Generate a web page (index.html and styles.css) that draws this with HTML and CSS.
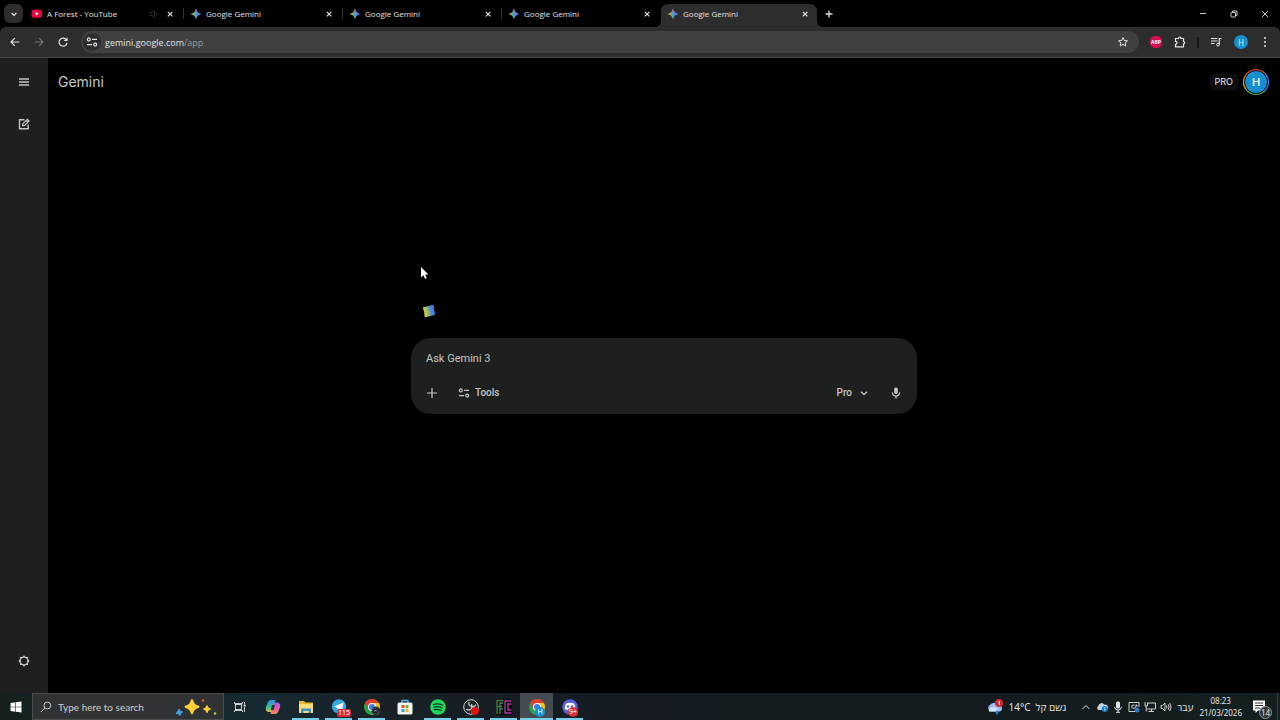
FILE: index.html
```html
<!DOCTYPE html>
<html lang="en">
<head>
    <meta charset="UTF-8">
    <meta name="viewport" content="width=device-width, initial-scale=1.0">
    <title>Google Gemini</title>
    <link rel="stylesheet" href="styles.css">
</head>
<body>

    <!-- Shared icons -->
    <svg class="sprite" aria-hidden="true">
        <defs>
            <linearGradient id="sparkGradient" x1="0" y1="0.6" x2="1" y2="0.4">
                <stop offset="0.1" stop-color="#f2c230"/>
                <stop offset="0.35" stop-color="#5cb37c"/>
                <stop offset="0.6" stop-color="#4b8df8"/>
                <stop offset="1" stop-color="#5a8cf0"/>
            </linearGradient>
            <linearGradient id="sparkRed" x1="0" y1="0" x2="0" y2="1">
                <stop offset="0" stop-color="#ee5b6c"/>
                <stop offset="0.45" stop-color="#ee5b6c" stop-opacity="0"/>
            </linearGradient>
            <linearGradient id="loaderGradient" x1="0" y1="0.65" x2="1" y2="0.35">
                <stop offset="0.1" stop-color="#d3c64a"/>
                <stop offset="0.4" stop-color="#93bd6a"/>
                <stop offset="0.65" stop-color="#4a87e0"/>
                <stop offset="1" stop-color="#3b7bea"/>
            </linearGradient>
            <linearGradient id="copilotGradient" x1="0" y1="0" x2="0" y2="1">
                <stop offset="0" stop-color="#2f8fe8"/>
                <stop offset="0.6" stop-color="#3cc08c"/>
                <stop offset="1" stop-color="#f0c23c"/>
            </linearGradient>
            <linearGradient id="copilotPink" x1="0" y1="0" x2="0" y2="1">
                <stop offset="0" stop-color="#9b5cf0"/>
                <stop offset="0.5" stop-color="#ea5aa8"/>
                <stop offset="1" stop-color="#f58a4c"/>
            </linearGradient>
        </defs>
        <symbol id="spark" viewBox="0 0 12 12">
            <path fill="url(#sparkGradient)" d="M6 0.5C6.6 3.6 8.4 5.4 11.5 6 8.4 6.6 6.6 8.4 6 11.5 5.4 8.4 3.6 6.6 0.5 6 3.6 5.4 5.4 3.6 6 0.5Z"/>
            <path fill="url(#sparkRed)" d="M6 0.5C6.6 3.6 8.4 5.4 11.5 6 8.4 6.6 6.6 8.4 6 11.5 5.4 8.4 3.6 6.6 0.5 6 3.6 5.4 5.4 3.6 6 0.5Z"/>
        </symbol>
        <symbol id="close" viewBox="0 0 12 12">
            <path d="M3.8 3.8l4.6 4.6M8.4 3.8L3.8 8.4" fill="none" stroke="currentColor" stroke-width="1.2"/>
        </symbol>
        <symbol id="tune" viewBox="0 0 12 12">
            <g fill="none" stroke="currentColor" stroke-width="1.2">
                <circle cx="2.8" cy="3.4" r="1.5"/>
                <path d="M6 3.4h5M1 8.6h5"/>
                <circle cx="9.2" cy="8.6" r="1.5"/>
            </g>
        </symbol>
        <symbol id="chrome" viewBox="0 0 16 16">
            <circle cx="8" cy="8" r="8" fill="#2ba24c"/>
            <path d="M1.1 4A8 8 0 0 1 14.9 4L8 4 4.6 10Z" fill="#e33b2e"/>
            <path d="M14.9 4A8 8 0 0 1 8 16L11.5 10 8 4Z" fill="#fbc116"/>
            <circle cx="8" cy="8" r="4" fill="#fff"/>
            <circle cx="8" cy="8" r="3" fill="#3b7ded"/>
        </symbol>
    </svg>

    <!-- Tab strip -->
    <header class="tab-strip">
        <button class="tab-search" aria-label="Search tabs">
            <svg class="icon" viewBox="0 0 12 12"><path d="M3.6 5l2.4 2.4L8.4 5" fill="none" stroke="currentColor" stroke-width="1.3"/></svg>
        </button>
        <div class="tab">
            <svg class="icon" viewBox="0 0 12 12"><rect x="0.5" y="1.8" width="10.5" height="8" rx="2" fill="#e8083e"/><path d="M4.7 4l3 1.8-3 1.8z" fill="#fff"/></svg>
            <span>A Forest - YouTube</span>
            <svg class="icon muted" viewBox="0 0 12 12"><path d="M2 4.5h2L6.5 2.5v7L4 7.5H2zM8 4.5v3M10 5.5v1" fill="none" stroke="currentColor"/></svg>
            <button aria-label="Close tab"><svg class="icon"><use href="#close"/></svg></button>
        </div>
        <div class="tab">
            <svg class="icon"><use href="#spark"/></svg>
            <span>Google Gemini</span>
            <button aria-label="Close tab"><svg class="icon"><use href="#close"/></svg></button>
        </div>
        <div class="tab">
            <svg class="icon"><use href="#spark"/></svg>
            <span>Google Gemini</span>
            <button aria-label="Close tab"><svg class="icon"><use href="#close"/></svg></button>
        </div>
        <div class="tab">
            <svg class="icon"><use href="#spark"/></svg>
            <span>Google Gemini</span>
            <button aria-label="Close tab"><svg class="icon"><use href="#close"/></svg></button>
        </div>
        <div class="tab active">
            <svg class="icon"><use href="#spark"/></svg>
            <span>Google Gemini</span>
            <button aria-label="Close tab"><svg class="icon"><use href="#close"/></svg></button>
        </div>
        <button class="new-tab" aria-label="New tab">
            <svg class="icon" viewBox="0 0 12 12"><path d="M6 2.5v7M2.5 6h7" fill="none" stroke="currentColor" stroke-width="1.3"/></svg>
        </button>
        <div class="window-controls">
            <button aria-label="Minimize"><svg class="icon" viewBox="0 0 12 12"><path d="M3 5.5h6" stroke="currentColor" stroke-width="0.9"/></svg></button>
            <button aria-label="Restore"><svg class="icon" viewBox="0 0 12 12"><g fill="none" stroke="currentColor" stroke-width="0.9"><rect x="3" y="4.5" width="4.5" height="4.5" rx="0.5"/><path d="M4.5 4.5V3H9v4.5H7.5"/></g></svg></button>
            <button aria-label="Close"><svg class="icon" viewBox="0 0 12 12"><path d="M3 3l6 6M9 3L3 9" stroke="currentColor" stroke-width="0.9"/></svg></button>
        </div>
    </header>

    <!-- Toolbar -->
    <nav class="toolbar">
        <button aria-label="Back"><svg class="icon" viewBox="0 0 12 12"><path d="M10.5 6H2.2M5.8 2.2L2 6l3.8 3.8" fill="none" stroke="currentColor" stroke-width="1.2"/></svg></button>
        <button class="dim" aria-label="Forward"><svg class="icon" viewBox="0 0 12 12"><path d="M1.5 6h8.3M6.2 2.2L10 6 6.2 9.8" fill="none" stroke="currentColor" stroke-width="1.2"/></svg></button>
        <button aria-label="Reload"><svg class="icon" viewBox="0 0 12 12"><path d="M9.3 3.8A4 4 0 1 0 10 6.8M10 1.8v2.7H7.2" fill="none" stroke="currentColor" stroke-width="1.2"/></svg></button>
        <div class="address">
            <button class="site-info" aria-label="Site information"><svg class="icon"><use href="#tune"/></svg></button>
            <div class="url">gemini.google.com<span>/app</span></div>
            <button aria-label="Bookmark"><svg class="icon" viewBox="0 0 12 12"><path d="M6 1.6l1.3 2.9 3.2.3-2.4 2.1.7 3.1L6 8.4 3.2 10l.7-3.1L1.5 4.8l3.2-.3z" fill="none" stroke="currentColor"/></svg></button>
        </div>
        <div class="extensions">
            <button class="adblock" aria-label="Adblock Plus">ABP</button>
            <button aria-label="Extensions"><svg class="icon" viewBox="0 0 12 12"><path d="M1.5 2.5h3a1.3 1.3 0 0 1 2.6 0H9.5v3a1.2 1.2 0 0 1 0 2.4v3h-8V8.3a1.5 1.5 0 0 0 0-3z" fill="none" stroke="currentColor" stroke-width="1.2"/></svg></button>
            <span class="divider"></span>
            <button aria-label="Media controls"><svg class="icon" viewBox="0 0 12 12"><path d="M1 2.5h6.5M1 5h6.5M1 7.5h3.5M9.3 8.5V2.5h2.2" fill="none" stroke="currentColor" stroke-width="1.2"/><circle cx="8" cy="8.6" r="1.4" fill="none" stroke="currentColor"/></svg></button>
            <button class="profile" aria-label="Profile">H</button>
            <button aria-label="Menu"><svg class="icon" viewBox="0 0 12 12" fill="currentColor"><circle cx="6" cy="2" r="1"/><circle cx="6" cy="6" r="1"/><circle cx="6" cy="10" r="1"/></svg></button>
        </div>
    </nav>

    <!-- Gemini app -->
    <div class="app">
        <aside class="sidebar">
            <button aria-label="Main menu"><svg class="icon" viewBox="0 0 12 12"><path d="M1 3h10M1 6h10M1 9h10" stroke="currentColor" stroke-width="1.5"/></svg></button>
            <button aria-label="New chat"><svg class="icon" viewBox="0 0 12 12"><path d="M6.5 1.8H1.5v9h8.7V6.5" fill="none" stroke="currentColor" stroke-width="1.4"/><path d="M4.7 7.6V5.9L9.3 1.3l1.7 1.7-4.6 4.6zM8 2.5l1.8 1.8" fill="none" stroke="currentColor" stroke-width="1.3"/></svg></button>
            <button class="settings" aria-label="Settings"><svg class="icon" viewBox="0 0 12 12"><path d="M6 .3l1.6 1.7 2.4-.2v2.4L11.7 6 10 7.7v2.4l-2.4-.1L6 11.7 4.4 10 2 10.1V7.7L.3 6 2 4.2V1.8l2.4.2z" fill="currentColor"/><circle cx="6" cy="6" r="3.2" fill="#1e201f"/></svg></button>
        </aside>
        <main class="content">
            <div class="upper">
                <div class="app-header">
                    <a class="brand" href="#">Gemini</a>
                    <div class="account">
                        <span class="plan">PRO</span>
                        <button class="avatar" aria-label="Account"><span>H</span></button>
                    </div>
                </div>
                <div class="loader">
                    <svg class="loader-shape" viewBox="0 0 14 14"><path d="M1 3.2Q4.5 3 9.7 1 11.8.5 11.8 2 11.6 5 13 9.5 13.4 11.2 11.6 11.2 8 11.6 4.3 13 2.5 13.5 2.5 12 2.7 8 1 4.5Z" fill="url(#loaderGradient)"/></svg>
                    <svg class="cursor" viewBox="0 0 10 14"><path d="M1 1v10.5l2.5-2.3 1.6 3.7 1.7-.8L5.2 8.5H8.4z" fill="#fff"/></svg>
                </div>
            </div>
            <form class="composer">
                <input type="text" placeholder="Ask Gemini 3" aria-label="Enter a prompt">
                <div class="composer-actions">
                    <button type="button" aria-label="Add files"><svg class="icon" viewBox="0 0 12 12"><path d="M6 1v10M1 6h10" stroke="currentColor" stroke-width="1.2"/></svg></button>
                    <button type="button" class="tools"><svg class="icon"><use href="#tune"/></svg>Tools</button>
                    <button type="button" class="model">Pro<svg class="icon" viewBox="0 0 12 12"><path d="M3 4.7l3 3 3-3" fill="none" stroke="currentColor" stroke-width="1.3"/></svg></button>
                    <button type="button" aria-label="Use microphone"><svg class="icon" viewBox="0 0 12 12"><rect x="4.2" y="0.5" width="3.6" height="6.5" rx="1.7" fill="currentColor"/><path d="M2.4 5.5a3.6 3.6 0 0 0 7.2 0M6 9v2.5" fill="none" stroke="currentColor" stroke-width="1.3"/></svg></button>
                </div>
            </form>
        </main>
    </div>

    <!-- Taskbar -->
    <footer class="taskbar">
        <button class="start" aria-label="Start"><svg class="icon" viewBox="0 0 12 12" fill="#fff"><path d="M.5 2l4.7-.7v4.4H.5zM5.8 1.2L11.5.4v5.3H5.8zM.5 6.3h4.7v4.4L.5 10zM5.8 6.3h5.7v5.3l-5.7-.8z"/></svg></button>
        <label class="search">
            <svg class="icon" viewBox="0 0 12 12"><circle cx="7.3" cy="4.5" r="3.4" fill="none" stroke="currentColor"/><path d="M4.9 6.9L1 10.9" stroke="currentColor"/></svg>
            <input type="text" placeholder="Type here to search" aria-label="Search">
            <svg class="sparkles" viewBox="0 0 42 20">
                <path d="M17 2q1 0 1.6 2.4.7 2.6 3.3 3.6Q24.5 8.8 24.5 9.8t-2.6 1.7q-2.6 1-3.3 3.6Q18 17.5 17 17.5t-1.6-2.4q-.7-2.6-3.3-3.6Q9.5 10.8 9.5 9.8t2.6-1.8q2.6-1 3.3-3.6Q16 2 17 2z" fill="#fccf32"/>
                <path d="M32 8.5l1.2 2.4 2.3 1.1-2.3 1.3L32 15.7l-1.2-2.4-2.3-1.3 2.3-1.1z" fill="#fccf32" stroke="#fccf32"/>
                <path d="M4 12l1.3 2 2.2 1-1.8 1.2L5 18.4l-1.4-1.6L1 16.4l1.7-1.6z" fill="#38a5e8" stroke="#38a5e8"/>
                <circle cx="28" cy="3.5" r="1.3" fill="#d45b2c"/><circle cx="40" cy="16.5" r="1.3" fill="#b9c832"/>
            </svg>
        </label>
        <div class="apps">
            <button class="app-button task-view" aria-label="Task view"><svg class="icon" viewBox="0 0 12 12"><g fill="none" stroke="currentColor" stroke-width="0.9"><rect x="1.5" y="3.5" width="6" height="5"/><path d="M.5 1v1.5h8V1M.5 11V9.5h8V11M10.5 1v2M10.5 6v5"/></g><rect x="9.5" y="3.5" width="2" height="2" fill="currentColor"/></svg></button>
            <button class="app-button" aria-label="Copilot"><svg class="app-icon" viewBox="0 0 16 16"><path d="M5.5 1h5L7.5 12Q7 14 5 13H3Q0 12 1 8L3 3Q4 1 5.5 1z" fill="url(#copilotGradient)"/><path d="M10.5 15h-5L8.5 5Q9 3 11 3.5h2Q16 5 15 8.5L13 13q-1 2-2.5 2z" fill="url(#copilotPink)"/><path d="M7 6h3L8.5 11H6z" fill="#20303a"/></svg></button>
            <button class="app-button open" aria-label="File Explorer"><svg class="app-icon" viewBox="0 0 16 16"><path d="M1 2h5l1.5 1.5H15V14H1z" fill="#e9b63a"/><path d="M1 5h14v9H1z" fill="#fbdc78"/><path d="M3 14V9.5h10V14h-2.5v-2h-5v2z" fill="#3e93c8"/></svg></button>
            <button class="app-button open" aria-label="Telegram"><svg class="app-icon" viewBox="0 0 16 16"><circle cx="8" cy="7.5" r="7.2" fill="#37a7dc"/><path d="M3 7.4L12.5 3.6 11 11.5 7.7 9.3 6.3 10.8 5.8 8.4z" fill="#fff"/></svg><span class="badge">115</span></button>
            <button class="app-button open" aria-label="Chrome"><svg class="app-icon" viewBox="0 0 16 16"><use href="#chrome"/><circle cx="12" cy="12" r="4.5" fill="#343a3b"/><path d="M9 12q3-3 6-1l-3 3zM10 14l5-4" fill="#8b9290" stroke="#16191a"/></svg></button>
            <button class="app-button" aria-label="Microsoft Store"><svg class="app-icon" viewBox="0 0 16 16"><path d="M5 4V1.5h6V4" fill="none" stroke="#63b9e9" stroke-width="1.3"/><rect x="0.5" y="3.5" width="15" height="12" rx="1.5" fill="#f1f5f6"/><path d="M4.5 6h3v3h-3z" fill="#e6532e"/><path d="M8.5 6h3v3h-3z" fill="#75b62b"/><path d="M4.5 10h3v3h-3z" fill="#2a9be0"/><path d="M8.5 10h3v3h-3z" fill="#f1b920"/></svg></button>
            <button class="app-button open" aria-label="Spotify"><svg class="app-icon" viewBox="0 0 16 16"><circle cx="8" cy="8" r="7.8" fill="#22d760"/><path d="M3.3 5.5q5-1.5 9.5.8M3.8 8.2q4.4-1.3 8.2.8M4.3 10.7q3.6-1 6.7.7" fill="none" stroke="#113d20" stroke-width="1.3" stroke-linecap="round"/></svg></button>
            <button class="app-button open" aria-label="OBS Studio"><svg class="app-icon" viewBox="0 0 16 16"><circle cx="8" cy="8" r="7.3" fill="#202325" stroke="#d2d4d5"/><path d="M6 3q-1 4 3 4.5 3 .5 4-2M3.5 10q2 2 4.5 0 2-2 .5-5M8 13q4-1 3-5" fill="none" stroke="#c8cacb" stroke-width="1.3"/><circle cx="12" cy="12" r="3.8" fill="#f00d0d"/></svg></button>
            <button class="app-button open" aria-label="FC"><svg class="app-icon" viewBox="0 0 16 16"><path d="M0 0h16v16H0z" fill="#080d0c"/><path d="M1 15V1.5h6.5M1 7.5h5M4 15V4h3M4 10h3" fill="none" stroke="#3d8451" stroke-width="1.3"/><path d="M15.5 2H9v12h6.5M15.5 5h-3.5v6h3.5" fill="none" stroke="#b531a3" stroke-width="1.3"/></svg></button>
            <button class="app-button open current" aria-label="Google Gemini - Chrome"><svg class="app-icon" viewBox="0 0 16 16"><use href="#chrome"/></svg><span class="badge blue">H</span></button>
            <button class="app-button open" aria-label="Discord"><svg class="app-icon" viewBox="0 0 16 16"><circle cx="8" cy="8" r="7.8" fill="#5560d8"/><path d="M4 4.5q4-1.5 8 0 1.5 2.5 1.3 5.5l-2.3 1.3-1-1H6l-1 1L2.7 10Q2.5 7 4 4.5z" fill="#fff"/><circle cx="6" cy="7.5" r="1.2" fill="#5560d8"/><circle cx="10" cy="7.5" r="1.2" fill="#5560d8"/></svg><span class="badge round">9+</span></button>
        </div>
        <div class="tray">
            <button class="weather" dir="rtl">
                <span>גשם קל</span>
                <span dir="ltr">14°C</span>
                <svg class="weather-icon" viewBox="0 0 18 16"><path d="M4.5 12.5a3.8 3.8 0 0 1 0-7A5 5 0 0 1 12 5.5a3.7 3.7 0 0 1 2 7z" fill="#9cbcf4"/><path d="M3 12.5a3 3 0 0 1 3-4 4 4 0 0 1 6 4z" fill="#d6e3fc"/><path d="M11 11.5q2 2 0 4-2-2 0-4z" fill="#2d74d8" stroke="#2d74d8"/><circle cx="13" cy="4" r="4" fill="#d5272e"/><path d="M12.3 3l1-.8v4" fill="none" stroke="#fff" stroke-width="0.9"/></svg>
            </button>
            <button aria-label="Hidden icons"><svg class="icon" viewBox="0 0 12 12"><path d="M2.5 8L6 4.5 9.5 8" fill="none" stroke="currentColor"/></svg></button>
            <button aria-label="OneDrive"><svg class="icon" viewBox="0 0 12 12"><path d="M2.5 9A2.2 2.2 0 0 1 2.3 5 3.3 3.3 0 0 1 8.4 3.7 2.7 2.7 0 0 1 10 9z" fill="#c6d2d6"/><circle cx="8.7" cy="8" r="3" fill="#1683d0"/><path d="M8.7 7.5v2M8.7 6v.8" stroke="#fff" stroke-width="0.8"/></svg></button>
            <button aria-label="Microphone"><svg class="icon" viewBox="0 0 12 12"><rect x="4" y="0.5" width="4" height="7" rx="1.5" fill="currentColor"/><path d="M2.5 6q.5 3 3.5 3t3.5-3M6 9v2.5M4 11.3h4" fill="none" stroke="currentColor"/></svg></button>
            <button aria-label="Display"><svg class="icon" viewBox="0 0 12 12"><path d="M7 10.5H1V1.5h10V6M4.5 4.2h2M4 4v3.5M5 7.5q3 0 3.5-3.5M7.5 4h1.5v1.5" fill="none" stroke="currentColor" stroke-width="0.9"/><circle cx="9" cy="9" r="2.5" fill="#2b78c4"/></svg></button>
            <button aria-label="Network"><svg class="icon" viewBox="0 0 12 12"><path d="M3 2h8.5v6H3M1 1v4h2.5V2M2.2 5v5.5M7.5 8v2.5M4.5 10.5H10" fill="none" stroke="currentColor" stroke-width="0.9"/></svg></button>
            <button aria-label="Volume"><svg class="icon" viewBox="0 0 12 12"><path d="M1 4.5h1.5L5 2v8L2.5 7.5H1zM6.5 4.5q1 1.5 0 3M8.2 3.2q1.8 2.8 0 5.6M9.8 2q2.5 4 0 8" fill="none" stroke="currentColor" stroke-width="0.9"/></svg></button>
            <button class="language">עבר</button>
            <div class="clock"><time>08:23</time><time>21/03/2026</time></div>
            <button class="notifications" aria-label="Notifications"><svg class="app-icon" viewBox="0 0 16 16"><path d="M1 1.5h12v10H6l-2.5 2.5v-2.5H1z" fill="#fff"/><path d="M3 4h8M3 6.5h8M3 9h5" stroke="#2c3534"/></svg><span class="count">14</span></button>
        </div>
    </footer>

</body>
</html>
```
FILE: styles.css
```css
/* General Styles */
* {
    box-sizing: border-box;
}

body {
    margin: 0;
    min-height: 100vh;
    display: flex;
    flex-direction: column;
    background: #000;
    color: #e3e3e3;
    font-family: "Noto Sans", "Open Sans", "DejaVu Sans", sans-serif;
    font-size: 10px;
}

button {
    display: flex;
    align-items: center;
    justify-content: center;
    padding: 0;
    border: none;
    background: none;
    color: inherit;
    font: inherit;
    cursor: pointer;
}

input {
    min-width: 0;
    padding: 0;
    border: none;
    outline: none;
    background: none;
    color: inherit;
    font: inherit;
}

.sprite {
    position: absolute;
    width: 0;
    height: 0;
}

.icon {
    display: block;
    flex: none;
    width: 12px;
    height: 12px;
}

/* Tab strip */
.tab-strip {
    display: flex;
    align-items: center;
    height: 27px;
    padding-left: 4px;
}

.tab-search {
    width: 19px;
    height: 19px;
    margin-right: 2px;
    border-radius: 6px;
    background: #2d2d2d;
}

.tab {
    position: relative;
    display: flex;
    align-items: center;
    flex: 0 1 159px;
    min-width: 0;
    height: 23px;
    margin-top: 4px;
    padding: 0 8px 4px 6px;
}

.tab + .tab:not(.active)::before {
    content: "";
    position: absolute;
    left: -1px;
    top: 4px;
    width: 1px;
    height: 11px;
    background: #333;
}

.tab span {
    flex: 1;
    margin-left: 4px;
    overflow: hidden;
    white-space: nowrap;
    font-family: "Open Sans", sans-serif;
    font-size: 8px;
    font-weight: 500;
}

.tab .muted {
    margin-right: 4px;
    color: #2b2b2b;
}

.tab.active {
    flex-basis: 156px;
    padding-right: 6px;
    border-radius: 7px 7px 0 0;
    background: #2d2d2d;
}

.tab.active::before,
.tab.active::after {
    content: "";
    position: absolute;
    bottom: 0;
    width: 6px;
    height: 6px;
}

.tab.active::before {
    right: 100%;
    background: radial-gradient(circle at 0 0, transparent 6px, #2d2d2d 6px);
}

.tab.active::after {
    left: 100%;
    background: radial-gradient(circle at 100% 0, transparent 6px, #2d2d2d 6px);
}

.new-tab {
    margin-left: 6px;
}

.window-controls {
    display: flex;
    margin-left: auto;
}

.window-controls button {
    width: 31px;
    height: 27px;
}

/* Toolbar */
.toolbar {
    display: flex;
    align-items: center;
    height: 31px;
    padding: 0 9px;
    border-bottom: 1px solid #444;
    border-radius: 6px 6px 0 0;
    background: #2d2d2d;
}

.toolbar > button {
    margin-right: 12px;
}

.toolbar .dim {
    color: #737373;
}

.address {
    display: flex;
    align-items: center;
    flex: 1;
    height: 22px;
    padding: 0 10px 0 2px;
    border-radius: 11px;
    background: #404040;
}

.site-info {
    width: 18px;
    height: 18px;
    border-radius: 50%;
    background: #2d2d2d;
}

.url {
    flex: 1;
    margin-left: 4px;
    font-family: "Open Sans", sans-serif;
    font-size: 9px;
    font-weight: 500;
}

.url span {
    color: #999;
}

.extensions {
    display: flex;
    align-items: center;
    gap: 12px;
    margin-left: 11px;
}

.adblock {
    width: 12px;
    height: 12px;
    border-radius: 5px;
    background: #d90d52;
    color: #fff;
    font-size: 5px;
    font-weight: bold;
}

.divider {
    width: 2px;
    height: 11px;
    margin: 0 -1px;
    background: #161616;
}

.profile {
    width: 14px;
    height: 14px;
    margin: 0 -1px 0 0;
    border-radius: 50%;
    background: #168fd0;
    font-size: 8px;
}

/* Gemini app */
.app {
    display: flex;
    flex: 1;
    font-family: "Roboto", sans-serif;
}

.sidebar {
    display: flex;
    flex-direction: column;
    align-items: center;
    width: 48px;
    padding: 12px 0 20px;
    background: #1e201f;
    color: #c4c7c5;
}

.sidebar button {
    width: 24px;
    height: 24px;
    margin-bottom: 18px;
}

.sidebar .settings {
    margin: auto 0 0;
}

.content {
    display: grid;
    flex: 1;
    grid-template-rows: 1fr auto 1fr;
    justify-items: center;
}

.upper {
    display: flex;
    flex-direction: column;
    justify-content: space-between;
    width: 100%;
}

.app-header {
    display: flex;
    align-items: center;
    justify-content: space-between;
    height: 48px;
    padding: 0 11px 0 10px;
    font-family: "Inter", sans-serif;
}

.brand {
    color: #c4c7c5;
    font-size: 14px;
    line-height: 18px;
    text-decoration: none;
}

.account {
    display: flex;
    align-items: center;
    gap: 5px;
}

.plan {
    padding: 2px 5px;
    border-radius: 4px;
    background: #0e0e0e;
    font-size: 9px;
    line-height: 12px;
}

.avatar {
    width: 26px;
    height: 26px;
    border-radius: 50%;
    background: conic-gradient(#ea4335 0 10%, #4285f4 16% 35%, #34a853 42% 62%, #fbbc04 68% 78%, #ea4335 86%);
}

.avatar span {
    width: 24px;
    height: 24px;
    border: 1px solid #000;
    border-radius: 50%;
    background: #168fd0;
    color: #fff;
    font-size: 11px;
    font-weight: 500;
    line-height: 22px;
}

.loader {
    position: relative;
    width: 100%;
    max-width: 506px;
    margin: 0 auto;
    padding: 0 11px 20px;
}

.loader-shape {
    display: block;
    width: 14px;
    height: 14px;
}

.cursor {
    position: absolute;
    left: 9px;
    bottom: 58px;
    width: 10px;
    height: 14px;
}

.composer {
    width: 100%;
    max-width: 506px;
    padding: 13px 15px 9px;
    border-radius: 20px;
    background: #1e201f;
    color: #c4c7c5;
}

.composer input {
    display: block;
    width: 100%;
    height: 16px;
    font-size: 11px;
}

.composer input::placeholder,
.search input::placeholder {
    color: inherit;
    opacity: 1;
}

.composer-actions {
    display: flex;
    align-items: center;
    height: 24px;
    margin-top: 14px;
}

.tools {
    gap: 5px;
    margin-left: 20px;
    font-weight: 500;
}

.model {
    gap: 6px;
    margin-left: auto;
    margin-right: 20px;
    font-weight: 500;
}

/* Taskbar */
.taskbar {
    display: flex;
    height: 27px;
    background: linear-gradient(90deg, #14211f 0, #172a32 20%, #172126 30%, #151b20 50%, #131b1e 75%, #14201f 100%);
}

.start {
    width: 32px;
}

.search {
    display: flex;
    align-items: center;
    flex: 0 1 192px;
    min-width: 0;
    padding: 0 6px 0 7px;
    border: 1px solid #4a4d4e;
    background: #303233;
    color: #cfcfcf;
}

.search input {
    flex: 1;
    margin-left: 6px;
    font-family: "Lato", sans-serif;
    font-size: 10px;
}

.sparkles {
    flex: none;
    width: 42px;
    height: 20px;
}

.apps {
    display: flex;
}

.app-button {
    position: relative;
    width: 33px;
}

.task-view {
    width: 32px;
}

.app-button.open::after {
    content: "";
    position: absolute;
    left: 3px;
    right: 3px;
    bottom: 0;
    height: 2px;
    background: #76cfe8;
}

.app-button.current {
    background: #454b50;
}

.app-button.current::after {
    left: 0;
    right: 0;
}

.app-icon {
    display: block;
    flex: none;
    width: 16px;
    height: 16px;
}

.badge {
    position: absolute;
    left: 15px;
    bottom: 3px;
    padding: 0 1px;
    border-radius: 2px;
    background: #dc2c38;
    color: #fff;
    font-size: 7px;
    line-height: 8px;
}

.badge.blue,
.badge.round {
    width: 10px;
    height: 10px;
    padding: 0;
    border-radius: 50%;
    line-height: 10px;
    text-align: center;
}

.badge.blue {
    background: #168fd0;
}

.tray {
    display: flex;
    align-items: center;
    margin-left: auto;
    margin-right: 2px;
    padding-right: 7px;
    border-right: 1px solid #34403f;
    gap: 4px;
}

.weather {
    gap: 5px;
    margin-right: 10px;
    font-size: 10px;
}

.weather-icon {
    width: 18px;
    height: 16px;
}

.language {
    margin-left: 1px;
}

.clock {
    display: flex;
    flex-direction: column;
    align-items: center;
    margin-left: 2px;
    font-size: 8px;
    line-height: 12px;
}

.notifications {
    position: relative;
    width: 20px;
    height: 20px;
    margin-left: 4px;
}

.count {
    position: absolute;
    right: -2px;
    bottom: -2px;
    width: 13px;
    height: 13px;
    border: 1px solid #8d9493;
    border-radius: 50%;
    background: #303837;
    font-size: 8px;
    line-height: 11px;
    text-align: center;
}
```
